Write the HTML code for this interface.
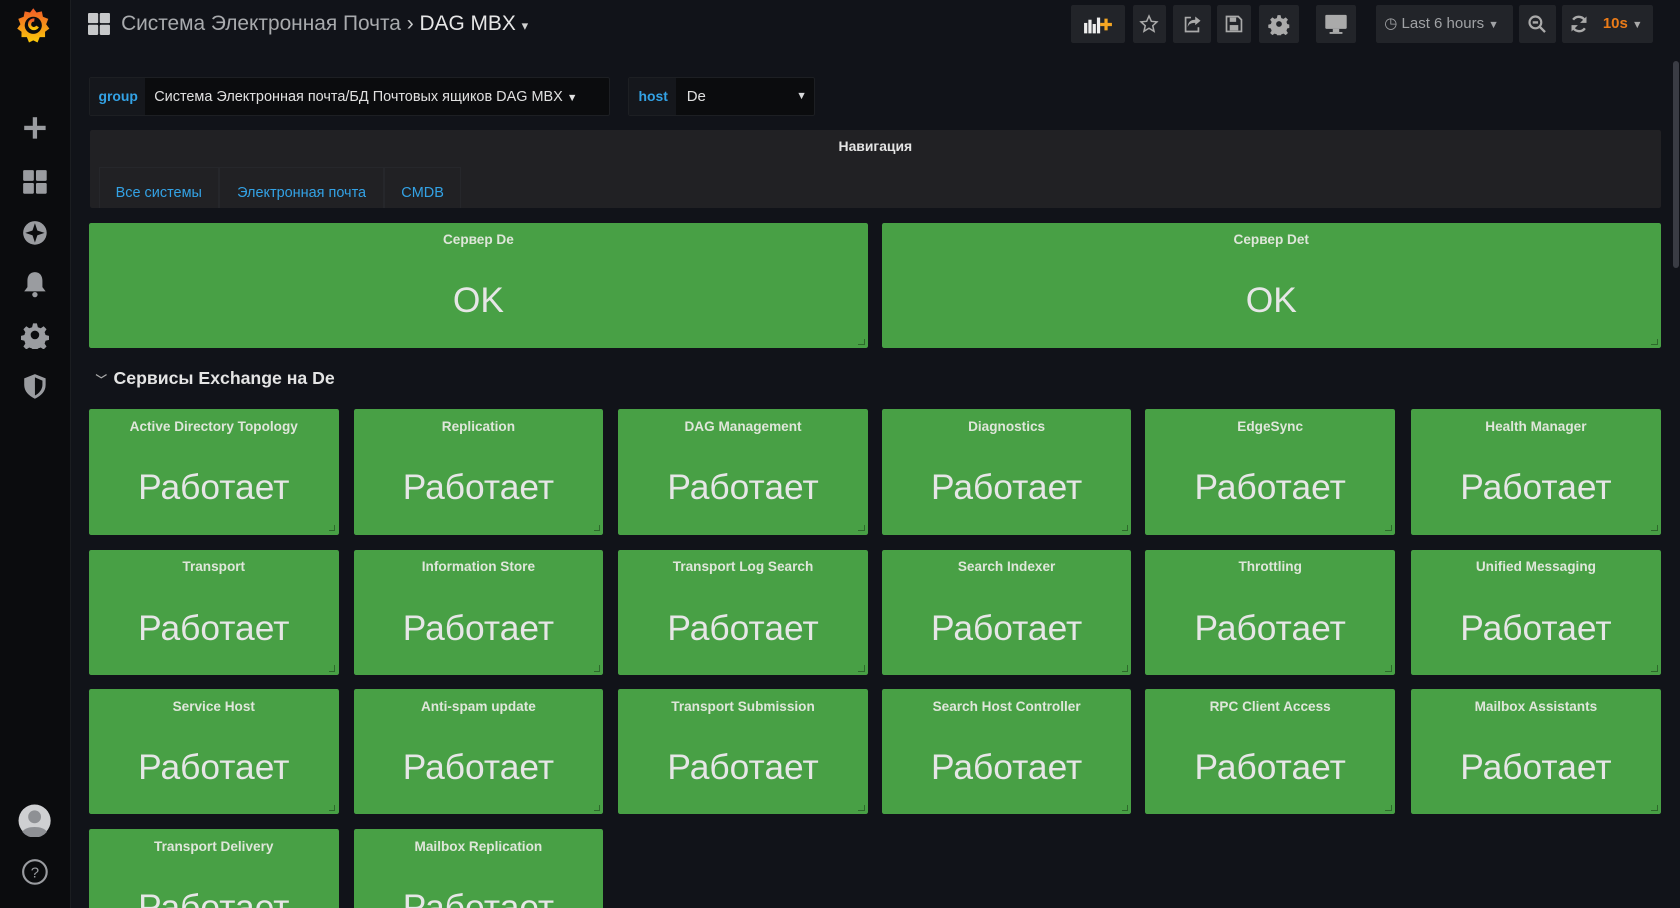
<!DOCTYPE html>
<html><head><meta charset="utf-8"><style>
*{box-sizing:border-box;margin:0;padding:0}
html,body{width:1680px;height:908px;overflow:hidden;background:#111319}
#w{zoom:1.071429;width:1568px;height:847px;position:relative;overflow:hidden;font-family:"Liberation Sans","Noto Sans CJK SC",sans-serif;color:#d8d9da;background:#111319}
.abs{position:absolute}
#side{left:0;top:0;width:66px;height:847px;background:#0b0c0e;border-right:1px solid #1b1d21}
.ic{position:absolute;left:20px;width:26px;height:26px;fill:#9a9ca0}
.btn{position:absolute;top:5px;height:35px;background:#222429;border-radius:2px}
.btn svg{position:absolute;left:50%;top:50%;transform:translate(-50%,-50%)}
.p{position:absolute;background:#48a045;border-radius:2px;text-align:center;color:#e6e6e6}
.p .t{position:absolute;top:9px;left:0;right:0;font-size:12.7px;font-weight:bold;color:#dfe6da}
.p .v{position:absolute;left:0;right:0;font-size:33px}
.p:after{content:"";position:absolute;right:3px;bottom:3px;width:5px;height:5px;border-right:1px solid #2d6a2b;border-bottom:1px solid #2d6a2b}
</style></head><body><div id="w">
<div id="side" class="abs">
<svg class="abs" style="left:13px;top:5px" width="36" height="36" viewBox="0 0 36 36"><defs><linearGradient id="g" x1="0" y1="1" x2="0" y2="0"><stop offset="0" stop-color="#fbca0a"/><stop offset="1" stop-color="#f05a28"/></linearGradient></defs><path fill="url(#g)" d="M18 3l3 4 5-1 1 5 5 2-2 5 3 4-4 3 0 5-5 0-2 5-4-2-4 2-2-5-5 0 0-5-4-3 3-4-2-5 5-2 1-5 5 1z"/><circle cx="18" cy="19" r="8" fill="#0b0c0e"/><path d="M22 20a4 4 0 1 1-3-6" stroke="url(#g)" stroke-width="3" fill="none"/></svg>
<svg class="ic" style="top:106px" viewBox="0 0 26 26"><rect x="11" y="3" width="4" height="20"/><rect x="3" y="11" width="20" height="4"/></svg>
<svg class="ic" style="top:157px" viewBox="0 0 26 26"><rect x="2" y="2" width="10" height="10" rx="1"/><rect x="14" y="2" width="10" height="10" rx="1"/><rect x="2" y="14" width="10" height="10" rx="1"/><rect x="14" y="14" width="10" height="10" rx="1"/></svg>
<svg class="ic" style="top:204px" viewBox="0 0 26 26"><circle cx="13" cy="13" r="11"/><path d="M13 4l3 9-3 9-3-9z" fill="#0b0c0e"/><path d="M4 13l9-3 9 3-9 3z" fill="#0b0c0e"/></svg>
<svg class="ic" style="top:252px" viewBox="0 0 26 26"><path d="M13 2c-5 0-7 4-7 8v6l-3 4h20l-3-4v-6c0-4-2-8-7-8z"/><circle cx="13" cy="23" r="2.5"/></svg>
<svg class="ic" style="top:300px" viewBox="0 0 26 26"><path d="M11 1h4l1 4 3 1 3-2 3 3-2 3 1 3 4 1v4l-4 1-1 3 2 3-3 3-3-2-3 1-1 4h-4l-1-4-3-1-3 2-3-3 2-3-1-3-4-1v-4l4-1 1-3-2-3 3-3 3 2 3-1z" transform="scale(.9) translate(1.5 1.5)"/><circle cx="13" cy="13" r="4" fill="#0b0c0e"/></svg>
<svg class="ic" style="top:347px" viewBox="0 0 26 26"><path d="M13 2l10 4v6c0 6-4 10-10 13C7 22 3 18 3 12V6z"/><path d="M13 5l7 3v4c0 4-3 8-7 10z" fill="#0b0c0e"/></svg>
<svg class="abs" style="left:17px;top:750px" width="31" height="31" viewBox="0 0 31 31"><circle cx="15.5" cy="15.5" r="15" fill="#cfd0d2"/><circle cx="15.5" cy="12" r="6" fill="#8e9094"/><path d="M4 26c3-6 20-6 23 0a15 15 0 0 1-23 0z" fill="#8e9094"/></svg>
<svg class="abs" style="left:20px;top:801px" width="26" height="26" viewBox="0 0 26 26"><circle cx="13" cy="13" r="11" fill="none" stroke="#9a9ca0" stroke-width="2"/><text x="13" y="18" text-anchor="middle" font-size="14" fill="#9a9ca0" font-family="Liberation Sans">?</text></svg>
</div>
<svg class="abs" style="left:82px;top:12px" width="21" height="21" viewBox="0 0 21 21" fill="#c7c8ca"><rect x="0" y="0" width="9.5" height="9.5" rx="1"/><rect x="11" y="0" width="9.5" height="9.5" rx="1"/><rect x="0" y="11" width="9.5" height="9.5" rx="1"/><rect x="11" y="11" width="9.5" height="9.5" rx="1"/></svg>
<div class="abs" style="left:113px;top:11px;font-size:19.5px;color:#a8aaad;white-space:nowrap">Система Электронная Почта <span style="color:#c8c9cb">›</span> <span style="color:#e6e6e6">DAG MBX</span> <span style="font-size:12px;color:#d0d0d0">▾</span></div>
<div class="btn" style="left:1000px;width:50px"><svg width="30" height="18" viewBox="0 0 30 18"><rect x="2" y="8" width="3" height="10" fill="#eee"/><rect x="6" y="5" width="3" height="13" fill="#eee"/><rect x="10" y="9" width="3" height="9" fill="#eee"/><rect x="14" y="3" width="3" height="15" fill="#eee"/><path d="M21 4h3v4h4v3h-4v4h-3v-4h-4v-3h4z" fill="#f5a623"/></svg></div>
<div class="btn" style="left:1057px;width:31px"><svg width="18" height="18" viewBox="0 0 18 18"><path d="M9 1.5l2.2 5 5.3.5-4 3.6 1.2 5.2L9 13l-4.7 2.8 1.2-5.2-4-3.6 5.3-.5z" fill="none" stroke="#aaa" stroke-width="1.4"/></svg></div>
<div class="btn" style="left:1095px;width:35px"><svg width="18" height="18" viewBox="0 0 18 18"><path d="M12 2l5 4-5 4V8c-4 0-6 1-7 4 0-5 3-7 7-7z" fill="#aaa"/><path d="M8 3H3v13h12v-4" fill="none" stroke="#aaa" stroke-width="1.6"/></svg></div>
<div class="btn" style="left:1136px;width:32px"><svg width="16" height="16" viewBox="0 0 16 16"><path d="M1 1h11l3 3v11H1z" fill="none" stroke="#aaa" stroke-width="1.6"/><rect x="4" y="2" width="6" height="4" fill="#aaa"/><rect x="4" y="9" width="8" height="5" fill="#aaa"/></svg></div>
<div class="btn" style="left:1175px;width:37px"><svg width="20" height="20" viewBox="0 0 26 26" fill="#aaa"><path d="M11 1h4l1 4 3 1 3-2 3 3-2 3 1 3 4 1v4l-4 1-1 3 2 3-3 3-3-2-3 1-1 4h-4l-1-4-3-1-3 2-3-3 2-3-1-3-4-1v-4l4-1 1-3-2-3 3-3 3 2 3-1z" transform="scale(.9) translate(1.5 1.5)"/><circle cx="13" cy="13" r="3.5" fill="#222429"/></svg></div>
<div class="btn" style="left:1228px;width:38px"><svg width="22" height="19" viewBox="0 0 22 19"><rect x="1" y="1" width="20" height="13" rx="1" fill="#aaa"/><rect x="8" y="14" width="6" height="3" fill="#aaa"/><rect x="5" y="17" width="12" height="2" fill="#aaa"/></svg></div>
<div class="btn" style="left:1284px;width:128px;font-size:14px;color:#a0a2a5;line-height:35px;padding-left:8px;white-space:nowrap">◷ Last 6 hours <span style="font-size:10px">▼</span></div>
<div class="btn" style="left:1418px;width:34px"><svg width="18" height="18" viewBox="0 0 18 18"><circle cx="7.5" cy="7.5" r="5.5" fill="none" stroke="#aaa" stroke-width="2"/><path d="M5 7.5h5M11.5 11.5l5 5" stroke="#aaa" stroke-width="2.2"/></svg></div>
<div class="btn" style="left:1458px;width:85px"><svg style="left:16px" width="18" height="18" viewBox="0 0 18 18"><path d="M15 7A6.5 6.5 0 0 0 3.5 5M3 11a6.5 6.5 0 0 0 11.5 2" fill="none" stroke="#aaa" stroke-width="2.2"/><path d="M16 2v6h-6zM2 16v-6h6z" fill="#aaa"/></svg><span style="position:absolute;left:38px;top:0;line-height:35px;font-size:14px;color:#eb7b18;font-weight:bold">10s <span style="font-size:10px;color:#aaa">▼</span></span></div>
<div class="abs" style="left:1561px;top:57px;width:6px;height:193px;background:#3a3c44;border-radius:3px"></div>
<div class="abs" style="left:83px;top:72px;width:486px;height:36px;background:#0b0c0e;border:1px solid #1d1f23;border-radius:2px;font-size:13.5px;line-height:34px;white-space:nowrap"><span style="display:inline-block;width:51px;background:#15171c;color:#33a2e5;font-size:13px;font-weight:bold;padding-left:8px">group</span><span style="padding-left:9px;color:#e0e0e0">Система Электронная почта/БД Почтовых ящиков DAG MBX <span style="font-size:10px">▼</span></span></div>
<div class="abs" style="left:586px;top:72px;width:175px;height:36px;background:#0b0c0e;border:1px solid #1d1f23;border-radius:2px;font-size:14px;line-height:34px;white-space:nowrap"><span style="display:inline-block;width:44px;background:#15171c;color:#33a2e5;font-size:13px;font-weight:bold;padding-left:9px">host</span><span style="padding-left:10px;color:#e0e0e0">De</span><span style="position:absolute;right:7px;font-size:10px">▼</span></div>
<div class="abs" style="left:84px;top:121px;width:1466px;height:73px;background:#212124;border-radius:2px">
<div class="abs" style="left:0;right:0;top:8px;text-align:center;font-size:13px;font-weight:bold;color:#e4e4e4">Навигация</div>
<div class="abs" style="left:8px;top:35px;height:38px;display:flex;font-size:13.5px;color:#33a2e5;line-height:48px;white-space:nowrap">
<span style="padding:0 15px;border:1px solid #26272b;border-bottom:0">Все системы</span><span style="padding:0 16px;border:1px solid #26272b;border-bottom:0">Электронная почта</span><span style="padding:0 15px;border:1px solid #26272b;border-bottom:0">CMDB</span></div>
</div>
<div class="p" style="left:83px;top:208px;width:727px;height:117px"><div class="t">Сервер De</div><div class="v" style="top:54px">OK</div></div>
<div class="p" style="left:823px;top:208px;width:727px;height:117px"><div class="t">Сервер Det</div><div class="v" style="top:54px">OK</div></div>
<div class="abs" style="left:89px;top:343px;font-size:16.5px;font-weight:bold;color:#e4e4e4;white-space:nowrap"><span style="font-size:11px;color:#aaa;margin-right:6px">﹀</span>Сервисы Exchange на De</div>
<div id="grid"></div>
<script>
var n=["Active Directory Topology","Replication","DAG Management","Diagnostics","EdgeSync","Health Manager","Transport","Information Store","Transport Log Search","Search Indexer","Throttling","Unified Messaging","Service Host","Anti-spam update","Transport Submission","Search Host Controller","RPC Client Access","Mailbox Assistants","Transport Delivery","Mailbox Replication"];
var xs=[83,330,577,823,1069,1317],ys=[382,513,643,774],h="";
n.forEach(function(t,i){var x=xs[i%6],y=ys[Math.floor(i/6)];h+='<div class="p" style="left:'+x+'px;top:'+y+'px;width:233px;height:117px"><div class="t">'+t+'</div><div class="v" style="top:55px">Работает</div></div>';});
document.getElementById("grid").innerHTML=h;
</script>
</div></body></html>
